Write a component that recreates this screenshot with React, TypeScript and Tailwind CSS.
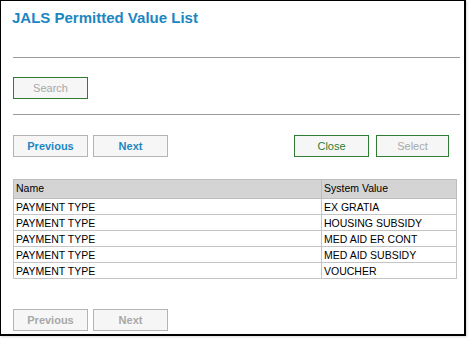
import React from "react";

const rows: [string, string][] = [
  ["PAYMENT TYPE", "EX GRATIA"],
  ["PAYMENT TYPE", "HOUSING SUBSIDY"],
  ["PAYMENT TYPE", "MED AID ER CONT"],
  ["PAYMENT TYPE", "MED AID SUBSIDY"],
  ["PAYMENT TYPE", "VOUCHER"],
];

const btn =
  "h-[22px] border bg-[#f6f6f6] text-[11px] flex items-center justify-center";

function NavButtons({ disabled, className }: { disabled?: boolean; className?: string }) {
  const text = disabled ? "text-[#a8a8a8]" : "text-[#1c86c2]";
  return (
    <div className={`flex gap-[5px] ${className ?? ""}`}>
      <button className={`${btn} w-[75px] border-[#b4b4b4] font-bold ${text}`}>Previous</button>
      <button className={`${btn} w-[75px] border-[#b4b4b4] font-bold ${text}`}>Next</button>
    </div>
  );
}

export default function App() {
  return (
    <div className="bg-white w-[469px] h-[339px] font-['Liberation_Sans',Arial,sans-serif]">
      <div className="w-[466px] h-[336px] border border-black border-r-2 border-b-2 shadow-[1px_1px_2px_rgba(0,0,0,0.15)] flex flex-col pl-[11px] pr-[4px]">
        <div className="pt-[8px] h-[26px] leading-[18px] text-[15px] font-bold text-[#1c86c2]">
          JALS Permitted Value List
        </div>
        <div className="mt-[30px] h-px bg-[#9a9a9a] ml-px" />
        <button className={`${btn} mt-[19px] ml-[1px] w-[75px] border-[#2e7d32] text-[#a8a8a8]`}>
          Search
        </button>
        <div className="mt-[15px] h-px bg-[#9a9a9a] ml-px" />
        <div className="mt-[20px] flex ml-[1px] mr-[11px]">
          <NavButtons />
          <div className="ml-auto flex gap-[7px]">
            <button className={`${btn} w-[75px] border-[#2e7d32] text-[#2e7d32]`}>Close</button>
            <button className={`${btn} w-[73px] border-[#2e7d32] text-[#a8a8a8]`}>Select</button>
          </div>
        </div>
        <table className="mt-[22px] ml-[1px] w-[444px] border-collapse border border-[#a6a6a6] text-[10.5px] text-black">
          <thead>
            <tr className="h-[19px] bg-[#d4d4d4]">
              <th className="w-[308px] text-left font-normal pl-[2px] border border-[#bdbdbd]">Name</th>
              <th className="text-left font-normal pl-[2px] border border-[#bdbdbd]">System Value</th>
            </tr>
          </thead>
          <tbody>
            {rows.map(([n, v], i) => (
              <tr key={i} className="h-[16px]">
                <td className="pl-[2px] border border-[#c4c4c4] leading-[14px]">{n}</td>
                <td className="pl-[2px] border border-[#c4c4c4] leading-[14px]">{v}</td>
              </tr>
            ))}
          </tbody>
        </table>
        <NavButtons disabled className="mt-[30px] ml-[1px]" />
      </div>
    </div>
  );
}
